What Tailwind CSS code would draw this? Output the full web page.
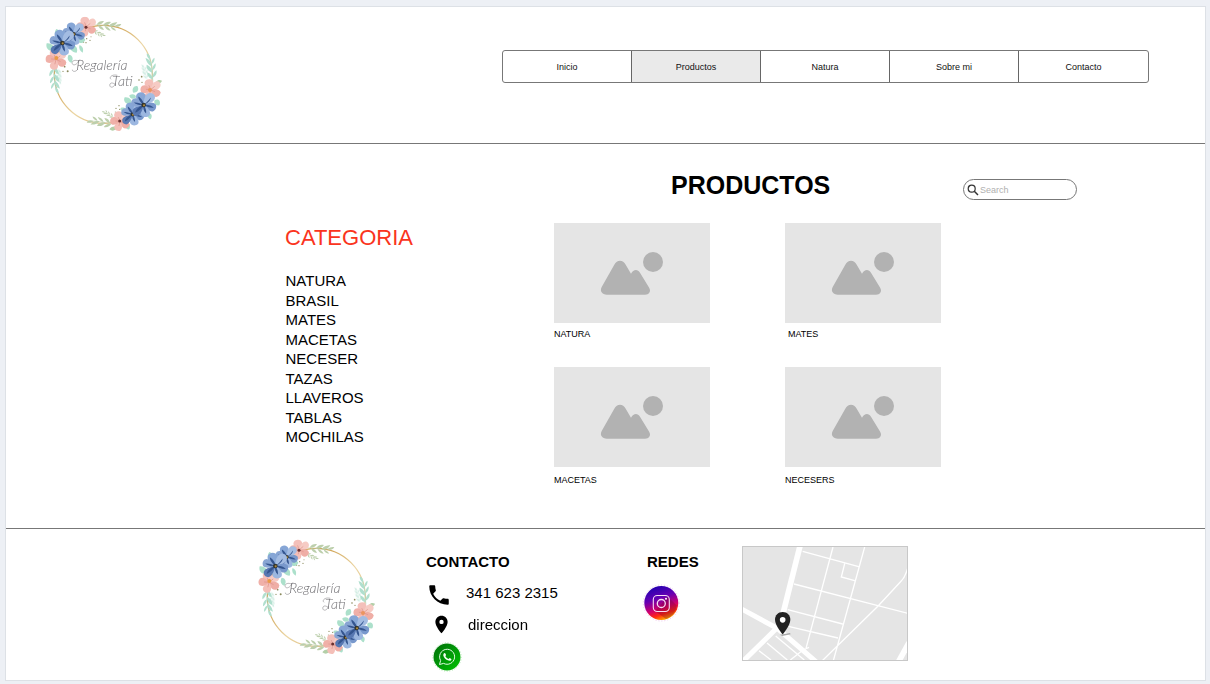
<!DOCTYPE html>
<html lang="es">
<head>
<meta charset="utf-8">
<title>Regalería Tati - Productos</title>
<script src="https://cdn.jsdelivr.net/npm/@tailwindcss/browser@4"></script>
</head>
<body class="h-[684px] w-[1210px] overflow-hidden bg-[#edf0f5] pl-[5px] pt-[6px] font-['Liberation_Sans',Arial,sans-serif] text-black">

<!-- Shared drawings -->
<svg class="absolute size-0" aria-hidden="true">
  <linearGradient id="gold" x1="0" y1="0" x2="1" y2="1">
    <stop offset="0" stop-color="#d9b36a"/><stop offset=".3" stop-color="#cda050"/><stop offset=".55" stop-color="#ecd6a4"/><stop offset="1" stop-color="#c99f55"/>
  </linearGradient>
  <symbol id="blue" viewBox="-36 -36 72 72" overflow="visible">
    <path d="M0 0C-20-6-28-26-16-34C-6-40 4-34 6-26C7-16 4-6 0 0Z" fill="#86a6d6"/>
    <path d="M0 0C0-12 2-30 16-34C28-36 35-26 31-16C26-6 12-2 0 0Z" fill="#a3bce2"/>
    <path d="M0 0C12-6 28-10 35-1C38 10 30 20 20 18C12 16 6 8 0 0Z" fill="#7898cc"/>
    <path d="M0 0C10 4 22 18 17 29C10 37-4 36-8 26C-9 14-4 6 0 0Z" fill="#9cb7e0"/>
    <path d="M0 0C-2 10-8 30-20 31C-32 30-36 18-28 10C-20 4-10 2 0 0Z" fill="#5878b2"/>
    <path d="M0 0C-10 4-26 8-34 0C-38-10-32-20-22-19C-12-16-4-6 0 0Z" fill="#88a5d3"/>
    <path d="M0 0C-8-6-16-16-15-24C-6-18 1-8 0 0ZM0 0C8-6 14-12 20-21C21-12 8-3 0 0ZM0 0C12-2 22 2 29 8C18 9 8 4 0 0ZM0 0C6 8 8 16 7 24C0 18-3 8 0 0ZM0 0C-6 10-14 18-24 22C-22 10-10 3 0 0ZM0 0C-8 2-20 0-28-7C-18-8-8-5 0 0Z" fill="#34558f"/>
    <circle r="6.500" fill="#33352f"/><circle r="3" cx="1" cy="1" fill="#b08a3a"/>
  </symbol>
  <symbol id="pink" viewBox="-28 -28 56 56" overflow="visible">
    <path d="M0 0C-14-4-22-18-12-26C-2-31 8-26 8-17C8-8 4-3 0 0Z" fill="#f4c0ba"/>
    <path d="M0 0C2-12 10-26 21-22C30-17 28-6 20-2C12 0 6 1 0 0Z" fill="#f6cbc4"/>
    <path d="M0 0C10-4 25-2 27 8C26 19 14 23 8 17C3 12 1 6 0 0Z" fill="#efaea6"/>
    <path d="M0 0C6 8 9 22 0 27C-12 29-19 20-15 12C-11 5-5 3 0 0Z" fill="#f4bfb8"/>
    <path d="M0 0C-6 8-20 14-26 6C-31-4-24-14-15-12C-7-9-3-4 0 0Z" fill="#f0b0a8"/>
    <path d="M0 0L-5-12M0 0L11-9M0 0L12 6M0 0L-3 13M0 0L-13-1" stroke="#e0958b" stroke-width="2" fill="none"/>
  </symbol>
  <symbol id="sprig" viewBox="0 0 80 30" overflow="visible">
    <path d="M0 0C26 2 50 8 76 2" fill="none" stroke-width="1.500"/>
    <path stroke="none" d="M6 0C10-10 20-12 28-11C24-4 16 2 6 0ZM24 3C30-8 40-11 49-8C44 0 34 5 24 3ZM42 5C50-6 58-6 68-7C62 3 54 7 42 5ZM60 5C66-1 74-3 80-1C76 6 70 8 60 5ZM10 2C18 2 26 10 28 16C18 16 12 10 10 2ZM30 4C38 5 46 12 48 18C38 17 32 12 30 4ZM48 6C56 7 62 12 64 18C56 17 50 13 48 6Z"/>
  </symbol>
  <symbol id="wreath" viewBox="42 42 360 360">
    <circle cx="220" cy="223" r="147" fill="none" stroke="url(#gold)" stroke-width="3.500"/>
    <g fill="#bccfac" stroke="#bccfac">
      <use href="#sprig" width="80" height="30" transform="translate(194 74)"/>
      <use href="#sprig" width="80" height="30" transform="translate(250 372) rotate(184)"/>
      <use href="#sprig" width="40" height="15" transform="translate(190 92) rotate(22)"/>
      <use href="#sprig" width="40" height="15" transform="translate(252 352) rotate(205)"/>
    </g>
    <g fill="#b0dfce" stroke="#b0dfce">
      <use href="#sprig" width="86" height="32" transform="translate(70 196) rotate(80)"/>
      <use href="#sprig" width="86" height="32" transform="translate(369 244) rotate(-102)"/>
      <g opacity=".6">
        <use href="#sprig" width="50" height="18" transform="translate(84 204) rotate(80)"/>
        <use href="#sprig" width="50" height="18" transform="translate(352 240) rotate(-110)"/>
      </g>
    </g>
    <g fill="#ace0cb">
      <path d="M72 152C56 156 46 144 50 130C64 128 74 138 72 152ZM86 104C72 108 72 96 79 87C90 90 92 98 86 104ZM122 136C136 132 146 146 140 158C126 158 118 148 122 136ZM142 122C146 110 162 108 166 120C160 132 148 132 142 122ZM116 164C128 164 132 178 124 188C114 184 110 174 116 164ZM148 136C158 138 162 148 158 158C150 154 146 146 148 136Z"/>
      <path d="M310 278C304 266 312 256 322 258C328 268 324 278 310 278ZM304 314C288 314 278 304 284 292C298 290 308 300 304 314ZM374 300C386 294 394 304 388 316C376 318 370 308 374 300ZM318 292C310 300 298 296 298 286C308 280 318 284 318 292ZM286 368C296 366 304 376 298 388C288 390 282 376 286 368ZM354 340C366 338 368 350 362 358C354 356 350 346 354 340ZM290 334C280 338 270 332 272 324C282 320 292 326 290 334Z"/>
    </g>
    <g fill="#b3cfa8"><path d="M238 388C246 376 258 380 262 382C256 394 246 394 238 388ZM378 246C384 238 390 240 396 242C392 252 384 252 378 246Z"/></g>
    <g fill="#8a8a5c">
      <circle cx="104" cy="200" r="2.500"/><circle cx="113" cy="214" r="3"/><circle cx="99" cy="214" r="2"/><circle cx="170" cy="116" r="2"/><circle cx="180" cy="121" r="2"/><circle cx="161" cy="127" r="1.500"/><circle cx="168" cy="128" r="2"/><circle cx="183" cy="110" r="1.500"/>
      <circle cx="335" cy="230" r="2.500"/><circle cx="327" cy="240" r="2.500"/><circle cx="336" cy="247" r="2"/><circle cx="258" cy="325" r="2"/><circle cx="267" cy="317" r="2"/><circle cx="269" cy="328" r="2"/><circle cx="256" cy="336" r="1.500"/>
    </g>
    <use href="#pink" x="139" y="50" width="60" height="60"/><circle cx="168" cy="82" r="4.500" fill="#6a3030"/>
    <use href="#pink" x="46" y="146" width="64" height="64"/><circle cx="79" cy="174" r="6" fill="#eb9a45"/>
    <use href="#blue" x="97" y="68" width="68" height="68"/>
    <use href="#blue" x="58" y="90" width="78" height="78"/>
    <use href="#pink" x="331" y="238" width="62" height="62"/><circle cx="360" cy="270" r="6" fill="#eb9560"/>
    <use href="#pink" x="240" y="334" width="60" height="60"/><circle cx="269" cy="363" r="4.500" fill="#6a3030"/>
    <use href="#blue" x="273" y="308" width="70" height="70"/>
    <use href="#blue" x="303" y="277" width="76" height="76"/>
    <path d="M147 184C132 176 122 186 128 193C134 198 144 190 150 178M143 208C136 218 126 214 127 209M262 226C246 222 236 232 243 238M256 250C252 266 236 264 240 252C244 246 252 250 256 254" fill="none" stroke="#89888c" stroke-width="1.800"/>
  </symbol>
  <symbol id="photo" viewBox="0 0 156 100">
    <path d="M47.700 64L60.300 41.700C63 36.500 69 36.500 71.700 41.700L77 50.700C79.500 46.200 83.500 45.800 86 49.700L95 64.500C97.500 68.500 95 71.700 91 71.700H53C48 71.700 45.500 68 47.700 64Z" fill="#b2b2b2"/>
    <circle cx="99" cy="39" r="10" fill="#b2b2b2"/>
  </symbol>
</svg>

<div class="flex h-[675px] w-[1201px] flex-col border border-[#dde1e6] bg-white">

  <header class="flex h-[137px] shrink-0 items-start border-b border-[#777] pl-[38px] pt-[7px]">
    <svg class="size-[120px] shrink-0" viewBox="42 42 360 360" fill="#6f6e72" font-family="Lato, 'Liberation Sans', sans-serif" font-style="italic" font-weight="300">
      <use href="#wreath" x="42" y="42" width="360" height="360"/>
      <text x="139" y="210" font-size="42" textLength="153" lengthAdjust="spacingAndGlyphs">Regalería</text>
      <text x="246" y="257" font-size="43" textLength="62" lengthAdjust="spacingAndGlyphs">Tati</text>
    </svg>
    <nav class="ml-[338px] mt-[36px] grid h-[33px] w-[647px] grid-cols-5 divide-x divide-[#666] overflow-hidden rounded-[3px] border border-[#777] text-center text-[9px] leading-[32px] text-[#111]">
      <a>Inicio</a>
      <a class="bg-[#eaeaea]">Productos</a>
      <a>Natura</a>
      <a>Sobre mi</a>
      <a>Contacto</a>
    </nav>
  </header>

  <main class="h-[384px] shrink-0">
    <div class="flex h-[79px] items-start pl-[665px] pt-[26px]">
      <h1 class="w-[160px] text-[25px] font-bold leading-[30px]">PRODUCTOS</h1>
      <label class="ml-[132px] mt-[9px] flex h-[21px] w-[114px] items-center gap-px rounded-full border border-[#777] pl-[3px] text-[9px] text-[#b0b0b0]">
        <svg class="size-[12px]" viewBox="0 0 12 12" fill="none" stroke="#333"><circle cx="4.700" cy="4.700" r="3.500" stroke-width="1.200"/><path d="M7.300 7.300L11 11" stroke-width="1.500"/></svg>
        <span class="leading-[12px]">Search</span>
      </label>
    </div>
    <div class="flex items-start pl-[279.5px]">
      <aside class="w-[268.5px] pt-[3px]">
        <h2 class="-ml-[0.5px] text-[22px] leading-[24px] text-[#fa3420]">CATEGORIA</h2>
        <ul class="mt-[21px] text-[15px] leading-[19.5px]">
          <li>NATURA</li><li>BRASIL</li><li>MATES</li><li>MACETAS</li><li>NECESER</li><li>TAZAS</li><li>LLAVEROS</li><li>TABLAS</li><li>MOCHILAS</li>
        </ul>
      </aside>
      <section class="grid grid-cols-[156px_156px] gap-x-[75px] text-[9px] leading-[12px]">
        <figure class="h-[144px]"><svg class="h-[100px] w-full bg-[#e5e5e5]"><use href="#photo"/></svg><figcaption class="mt-[5px]">NATURA</figcaption></figure>
        <figure class="h-[144px]"><svg class="h-[100px] w-full bg-[#e5e5e5]"><use href="#photo"/></svg><figcaption class="mt-[5px] pl-[3px]">MATES</figcaption></figure>
        <figure><svg class="h-[100px] w-full bg-[#e5e5e5]"><use href="#photo"/></svg><figcaption class="mt-[7px]">MACETAS</figcaption></figure>
        <figure><svg class="h-[100px] w-full bg-[#e5e5e5]"><use href="#photo"/></svg><figcaption class="mt-[7px]">NECESERS</figcaption></figure>
      </section>
    </div>
  </main>

  <footer class="flex flex-1 items-start border-t border-[#777] pl-[251px] text-[15px] leading-[20px]">
    <svg class="mt-[8px] size-[120px] shrink-0" viewBox="42 42 360 360" fill="#6f6e72" font-family="Lato, 'Liberation Sans', sans-serif" font-style="italic" font-weight="300">
      <use href="#wreath" x="42" y="42" width="360" height="360"/>
      <text x="139" y="210" font-size="42" textLength="153" lengthAdjust="spacingAndGlyphs">Regalería</text>
      <text x="246" y="257" font-size="43" textLength="62" lengthAdjust="spacingAndGlyphs">Tati</text>
    </svg>
    <section class="ml-[43px] mt-[23px] w-[227px]">
      <h3 class="pl-[6px] font-bold">CONTACTO</h3>
      <div class="mt-[11px] flex h-[30px] items-start gap-[14px] pl-[6px]">
        <svg class="-mt-px size-[26px]" viewBox="0 0 24 24"><path d="M6.620 10.790c1.440 2.830 3.760 5.140 6.590 6.590l2.200-2.200c.27-.27.67-.36 1.020-.24 1.120.37 2.330.57 3.570.57.55 0 1 .45 1 1V20c0 .55-.45 1-1 1C10.610 21 3 13.390 3 4c0-.55.45-1 1-1h3.500c.55 0 1 .45 1 1 0 1.250.2 2.450.57 3.570.11.35.03.74-.25 1.020l-2.200 2.200z"/></svg>
        <span>341 623 2315</span>
      </div>
      <div class="mt-[2px] flex h-[26px] items-start gap-[16px] pl-[11px]">
        <svg class="-mt-px size-[21px]" viewBox="0 0 24 24"><path d="M12 2C8.130 2 5 5.130 5 9c0 5.250 7 13 7 13s7-7.750 7-13c0-3.870-3.130-7-7-7zm0 9.500a2.500 2.500 0 1 1 0-5 2.500 2.500 0 0 1 0 5z"/></svg>
        <span>direccion</span>
      </div>
      <svg class="ml-[12px] mt-px size-[30px]" viewBox="0 0 30 30" fill="none">
        <linearGradient id="wa" x1="0" y1="0" x2="1" y2="1"><stop stop-color="#006d08"/><stop offset=".5" stop-color="#009908"/><stop offset="1" stop-color="#00c400"/></linearGradient>
        <circle cx="15" cy="15" r="14.300" stroke="#b4e8b4" stroke-dasharray="1 1.700"/>
        <circle cx="15" cy="15" r="13.500" fill="url(#wa)"/>
        <path d="M7.500 22.500L8.600 18.500A7.500 7.500 0 1 1 11.600 21.400Z" stroke="#e2fbe2" stroke-width="1" stroke-linejoin="round"/>
        <path d="M12.200 11.200C13.300 10.700 13.700 12 14 13C14 13.700 13.200 13.900 13.500 14.500C14.300 15.800 15.200 16.500 16.500 17C17.200 16.800 17.500 15.800 18.200 16.200L19.500 17.200C19.200 18.700 17.800 19 16.500 18.600C13.500 17.600 11.800 15.600 11.300 13.500C11.200 12.500 11.600 11.500 12.200 11.200Z" fill="#f4fff4"/>
      </svg>
    </section>
    <section class="mt-[23px] w-[95px]">
      <h3 class="font-bold">REDES</h3>
      <svg class="-ml-[5px] mt-[12px] size-[38px]" viewBox="0 0 38 38" fill="none">
        <linearGradient id="ig" x1=".3" y1="0" x2=".65" y2="1"><stop stop-color="#2000b0"/><stop offset=".35" stop-color="#6400b4"/><stop offset=".65" stop-color="#d4006a"/><stop offset=".82" stop-color="#ff2a10"/><stop offset="1" stop-color="#ffc000"/></linearGradient>
        <circle cx="19.300" cy="19" r="18" stroke="#efc4ef" stroke-dasharray="1 2"/>
        <circle cx="19.300" cy="19" r="17" fill="url(#ig)"/>
        <path d="M26 13L34.800 21.500A17 17 0 0 1 24 35L13 27Z" fill="#6c0028" opacity=".3"/>
        <rect x="11.300" y="11.500" width="16" height="16" rx="4" stroke="#f8dcf4" stroke-width="1.100"/>
        <circle cx="19.300" cy="19.500" r="4" stroke="#f8dcf4" stroke-width="1.300"/>
        <circle cx="24" cy="14.800" r="1" fill="#fff"/>
      </svg>
    </section>
    <svg class="mt-[17px] h-[115px] w-[166px] shrink-0 border border-[#c8c8c8] bg-[#e5e5e5]" viewBox="24 21 492 339" preserveAspectRatio="none" fill="none" stroke="#fff">
      <path d="M196 14L143 225" stroke-width="17"/>
      <path d="M18 206L128 266L244 366M128 262L22 366" stroke-width="15"/>
      <path d="M490 366L522 308" stroke-width="17"/>
      <path d="M203 34L371 80M294 21L213 325M389 21L295 362M329 71L319 111L359 122M177 132L518 220M158 209L323 252M160 259L309 294M518 85Q510 112 498 124L430 197L262 362M122 288L208 360M96 309L157 360M72 332L108 360M166 360L204 330L222 322" stroke-width="4"/>
      <path d="M134 284L165 279L167 283L142 288Z" fill="#aaa" stroke="none"/>
      <path d="M143 216C129 216 120 226 120 239C120 256 143 283 143 283S166 256 166 239C166 226 157 216 143 216Z" fill="#222" stroke="none"/>
      <circle cx="143" cy="239.500" r="8.500" fill="#fff" stroke="none"/>
    </svg>
  </footer>
</div>
</body>
</html>
